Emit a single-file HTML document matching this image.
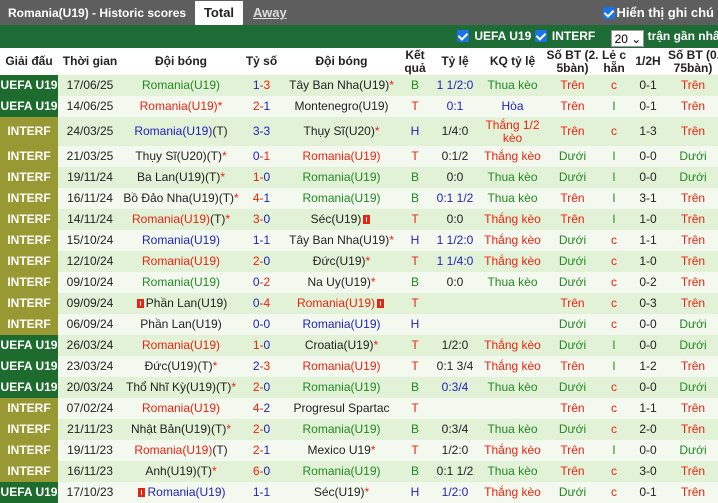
<!DOCTYPE html>
<html><head><meta charset="utf-8"><style>
*{margin:0;padding:0;box-sizing:border-box}
body{width:718px;height:502px;overflow:hidden;background:#fff;font-family:"Liberation Sans",Arial,sans-serif;font-size:12px;color:#222}
.top{height:25px;background:#5e5e5e;position:relative;color:#fff;font-weight:bold;font-size:12px}
.top .t{position:absolute;left:8px;top:6px}
.top .tab{position:absolute;left:195px;top:1px;width:48px;height:24px;background:#fff;color:#222;text-align:center;line-height:24px;font-size:13px}
.top .aw{position:absolute;left:253px;top:5px;color:#ddd;text-decoration:underline;font-size:13px}
.top .sh{position:absolute;right:4px;top:5px;font-size:13px}
.cb{display:inline-block;width:12px;height:12px;background:#1a73e8;border-radius:2px;vertical-align:-2px;margin-right:2px;position:relative}
.cb:after{content:"";position:absolute;left:3px;top:1px;width:4px;height:7px;border:solid #fff;border-width:0 2px 2px 0;transform:rotate(45deg)}
.gb{height:23px;background:#1d6b35;position:relative;color:#fff;font-weight:bold;font-size:12px}
.gb .r{position:absolute;left:457px;top:4px;white-space:nowrap}
.sel{display:inline-block;width:33px;height:17px;background:#fff;color:#000;vertical-align:-3px;margin:0 4px 0 12px;font-weight:normal;font-size:12px;padding:1px 0 0 3px;border:1px solid #999}
table{border-collapse:collapse;table-layout:fixed;width:718px;position:absolute;top:48px;left:0}
td,th{text-align:center;white-space:nowrap;overflow:hidden;padding:0;line-height:13px}
th{height:27px;font-weight:bold;color:#222;background:#fff}
td{height:21px}
tr.a td{background:#e2f2d6}
tr.b td{background:#f3f9ee}
td.u{background:#1e6b2e!important;color:#fff;font-weight:bold}
td.i{background:#999933!important;color:#fff;font-weight:bold}
.R{color:#e21}.B{color:#22b}.G{color:#282}.K{color:#222}
.rc{display:inline-block;width:7px;height:9px;background:#e21;vertical-align:-1px;margin:0 2px;position:relative}
.rc:after{content:"";position:absolute;left:3px;top:2px;width:1px;height:5px;background:#fff}
</style></head><body>
<div class="top"><span class="t">Romania(U19) - Historic scores</span><span class="tab">Total</span><span class="aw">Away</span><span class="sh"><span class="cb"></span>Hiển thị ghi chú</span></div>
<div class="gb"><div class="r"><span class="cb"></span> UEFA U19 <span class="cb"></span> INTERF <span class="sel">20 ⌄</span>trận gần nhất</div></div>
<table>
<colgroup><col style="width:58px"><col style="width:64px"><col style="width:118px"><col style="width:43px"><col style="width:117px"><col style="width:30px"><col style="width:50px"><col style="width:65px"><col style="width:55px"><col style="width:28px"><col style="width:40px"><col style="width:50px"></colgroup>
<tr><th>Giải đấu</th><th>Thời gian</th><th>Đội bóng</th><th>Tỷ số</th><th>Đội bóng</th><th>Kết<br>quả</th><th>Tỷ lệ</th><th>KQ tỷ lệ</th><th>Số BT (2.<br>5bàn)</th><th>Lẻ c<br>hẵn</th><th>1/2H</th><th>Số BT (0.<br>75bàn)</th></tr>
<tr class="a"><td class="u">UEFA U19</td><td>17/06/25</td><td class="G">Romania(U19)</td><td><span class="B">1</span><span class="R">-3</span></td><td>Tây Ban Nha(U19)<span class="R">*</span></td><td class="G">B</td><td class="B">1 1/2:0</td><td class="G">Thua kèo</td><td class="R">Trên</td><td class="R">c</td><td>0-1</td><td class="R">Trên</td></tr>
<tr class="b"><td class="u">UEFA U19</td><td>14/06/25</td><td class="R">Romania(U19)*</td><td><span class="R">2-</span><span class="B">1</span></td><td>Montenegro(U19)</td><td class="R">T</td><td class="B">0:1</td><td class="B">Hòa</td><td class="R">Trên</td><td class="G">l</td><td>0-1</td><td class="R">Trên</td></tr>
<tr class="a"><td class="i" style="height:29px">INTERF</td><td>24/03/25</td><td><span class="B">Romania(U19)</span>(T)</td><td class="B">3-3</td><td>Thụy Sĩ(U20)<span class="R">*</span></td><td class="B">H</td><td>1/4:0</td><td class="R">Thắng 1/2<br>kèo</td><td class="R">Trên</td><td class="R">c</td><td>1-3</td><td class="R">Trên</td></tr>
<tr class="b"><td class="i">INTERF</td><td>21/03/25</td><td>Thụy Sĩ(U20)(T)<span class="R">*</span></td><td><span class="B">0</span><span class="R">-1</span></td><td class="R">Romania(U19)</td><td class="R">T</td><td>0:1/2</td><td class="R">Thắng kèo</td><td class="G">Dưới</td><td class="G">l</td><td>0-0</td><td class="G">Dưới</td></tr>
<tr class="a"><td class="i">INTERF</td><td>19/11/24</td><td>Ba Lan(U19)(T)<span class="R">*</span></td><td><span class="R">1-</span><span class="B">0</span></td><td class="G">Romania(U19)</td><td class="G">B</td><td>0:0</td><td class="G">Thua kèo</td><td class="G">Dưới</td><td class="G">l</td><td>0-0</td><td class="G">Dưới</td></tr>
<tr class="b"><td class="i">INTERF</td><td>16/11/24</td><td>Bồ Đảo Nha(U19)(T)<span class="R">*</span></td><td><span class="R">4-</span><span class="B">1</span></td><td class="G">Romania(U19)</td><td class="G">B</td><td class="B">0:1 1/2</td><td class="G">Thua kèo</td><td class="R">Trên</td><td class="G">l</td><td>3-1</td><td class="R">Trên</td></tr>
<tr class="a"><td class="i">INTERF</td><td>14/11/24</td><td><span class="R">Romania(U19)</span>(T)<span class="R">*</span></td><td><span class="R">3-</span><span class="B">0</span></td><td>Séc(U19)<span class="rc"></span></td><td class="R">T</td><td>0:0</td><td class="R">Thắng kèo</td><td class="R">Trên</td><td class="G">l</td><td>1-0</td><td class="R">Trên</td></tr>
<tr class="b"><td class="i">INTERF</td><td>15/10/24</td><td class="B">Romania(U19)</td><td class="B">1-1</td><td>Tây Ban Nha(U19)<span class="R">*</span></td><td class="B">H</td><td class="B">1 1/2:0</td><td class="R">Thắng kèo</td><td class="G">Dưới</td><td class="R">c</td><td>1-1</td><td class="R">Trên</td></tr>
<tr class="a"><td class="i">INTERF</td><td>12/10/24</td><td class="R">Romania(U19)</td><td><span class="R">2-</span><span class="B">0</span></td><td>Đức(U19)<span class="R">*</span></td><td class="R">T</td><td class="B">1 1/4:0</td><td class="R">Thắng kèo</td><td class="G">Dưới</td><td class="R">c</td><td>1-0</td><td class="R">Trên</td></tr>
<tr class="b"><td class="i">INTERF</td><td>09/10/24</td><td class="G">Romania(U19)</td><td><span class="B">0</span><span class="R">-2</span></td><td>Na Uy(U19)<span class="R">*</span></td><td class="G">B</td><td>0:0</td><td class="G">Thua kèo</td><td class="G">Dưới</td><td class="R">c</td><td>0-2</td><td class="R">Trên</td></tr>
<tr class="a"><td class="i">INTERF</td><td>09/09/24</td><td><span class="rc"></span>Phần Lan(U19)</td><td><span class="B">0</span><span class="R">-4</span></td><td class="R">Romania(U19)<span class="rc"></span></td><td class="R">T</td><td></td><td></td><td class="R">Trên</td><td class="R">c</td><td>0-3</td><td class="R">Trên</td></tr>
<tr class="b"><td class="i">INTERF</td><td>06/09/24</td><td>Phần Lan(U19)</td><td class="B">0-0</td><td class="B">Romania(U19)</td><td class="B">H</td><td></td><td></td><td class="G">Dưới</td><td class="R">c</td><td>0-0</td><td class="G">Dưới</td></tr>
<tr class="a"><td class="u">UEFA U19</td><td>26/03/24</td><td class="R">Romania(U19)</td><td><span class="R">1-</span><span class="B">0</span></td><td>Croatia(U19)<span class="R">*</span></td><td class="R">T</td><td>1/2:0</td><td class="R">Thắng kèo</td><td class="G">Dưới</td><td class="G">l</td><td>0-0</td><td class="G">Dưới</td></tr>
<tr class="b"><td class="u">UEFA U19</td><td>23/03/24</td><td>Đức(U19)(T)<span class="R">*</span></td><td><span class="B">2</span><span class="R">-3</span></td><td class="R">Romania(U19)</td><td class="R">T</td><td>0:1 3/4</td><td class="R">Thắng kèo</td><td class="R">Trên</td><td class="G">l</td><td>1-2</td><td class="R">Trên</td></tr>
<tr class="a"><td class="u">UEFA U19</td><td>20/03/24</td><td>Thổ Nhĩ Kỳ(U19)(T)<span class="R">*</span></td><td><span class="R">2-</span><span class="B">0</span></td><td class="G">Romania(U19)</td><td class="G">B</td><td class="B">0:3/4</td><td class="G">Thua kèo</td><td class="G">Dưới</td><td class="R">c</td><td>0-0</td><td class="G">Dưới</td></tr>
<tr class="b"><td class="i">INTERF</td><td>07/02/24</td><td class="R">Romania(U19)</td><td><span class="R">4-</span><span class="B">2</span></td><td>Progresul Spartac</td><td class="R">T</td><td></td><td></td><td class="R">Trên</td><td class="R">c</td><td>1-1</td><td class="R">Trên</td></tr>
<tr class="a"><td class="i">INTERF</td><td>21/11/23</td><td>Nhật Bản(U19)(T)<span class="R">*</span></td><td><span class="R">2-</span><span class="B">0</span></td><td class="G">Romania(U19)</td><td class="G">B</td><td>0:3/4</td><td class="G">Thua kèo</td><td class="G">Dưới</td><td class="R">c</td><td>2-0</td><td class="R">Trên</td></tr>
<tr class="b"><td class="i">INTERF</td><td>19/11/23</td><td><span class="R">Romania(U19)</span>(T)</td><td><span class="R">2-</span><span class="B">1</span></td><td>Mexico U19<span class="R">*</span></td><td class="R">T</td><td>1/2:0</td><td class="R">Thắng kèo</td><td class="R">Trên</td><td class="G">l</td><td>0-0</td><td class="G">Dưới</td></tr>
<tr class="a"><td class="i">INTERF</td><td>16/11/23</td><td>Anh(U19)(T)<span class="R">*</span></td><td><span class="R">6-</span><span class="B">0</span></td><td class="G">Romania(U19)</td><td class="G">B</td><td>0:1 1/2</td><td class="G">Thua kèo</td><td class="R">Trên</td><td class="R">c</td><td>3-0</td><td class="R">Trên</td></tr>
<tr class="b"><td class="u">UEFA U19</td><td>17/10/23</td><td><span class="rc"></span><span class="B">Romania(U19)</span></td><td class="B">1-1</td><td>Séc(U19)<span class="R">*</span></td><td class="B">H</td><td class="B">1/2:0</td><td class="R">Thắng kèo</td><td class="G">Dưới</td><td class="R">c</td><td>0-1</td><td class="R">Trên</td></tr>
</table>
</body></html>
